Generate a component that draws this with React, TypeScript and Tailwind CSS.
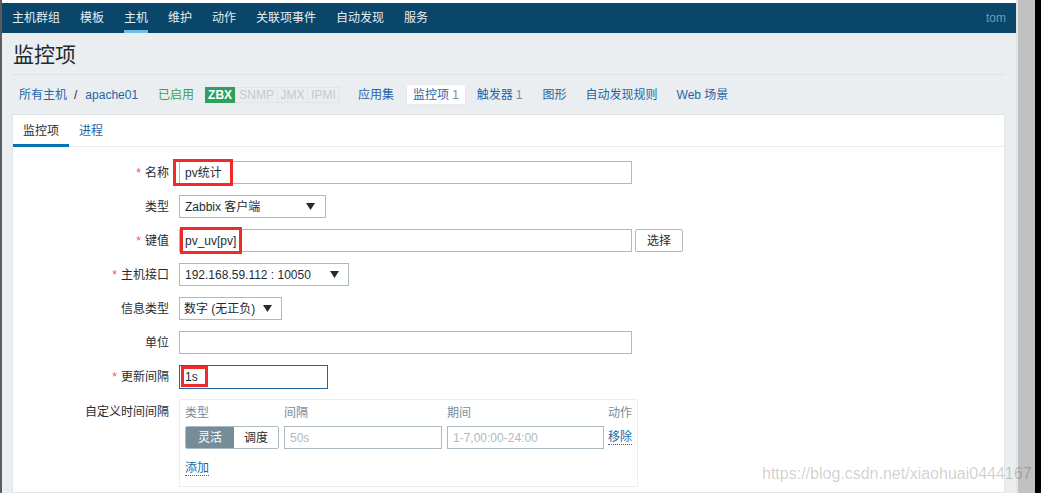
import React from 'react';

const navItems = ['主机群组', '模板', '主机', '维护', '动作', '关联项事件', '自动发现', '服务'];

const Arrow = () => (
  <svg width="9" height="7" viewBox="0 0 9 7" className="shrink-0">
    <polygon points="0,0 9,0 4.5,7" fill="#1f2c33" />
  </svg>
);

const Label = ({ text, required }: { text: string; required?: boolean }) => (
  <div className="w-[156px] shrink-0 text-right text-[#1f2c33]">
    {required ? <span className="mr-[4px] text-[#e45959]">*</span> : null}
    {text}
  </div>
);

const RedBox = ({ cls }: { cls: string }) => (
  <div className={`pointer-events-none absolute border-[3px] border-[#ee2a2a] ${cls}`} />
);

const App = () => {
  return <div className="relative flex h-[493px] w-[1041px] overflow-hidden bg-black font-['Liberation_Sans','Noto_Sans_CJK_SC',sans-serif] text-[12px] leading-[14px]">
      <div className="w-[2px] shrink-0 bg-[#5c5c5c]" />
      <div className="flex w-[1014px] shrink-0 flex-col bg-[#ebeef0]">
        <div className="h-[3px] bg-white" />
        <nav className="flex h-[30px] items-stretch bg-[#0a466a]">
          {navItems.map(item => <div key={item} className="relative flex items-center px-[10px] text-[#e6edf2]">
              {item}
              {item === '主机' ? <div className="absolute bottom-0 left-[10px] right-[10px] h-[3px] bg-[#6cbcec]" /> : null}
            </div>)}
          <div className="ml-auto flex items-center pr-[10px] text-[#6f9bb8]">tom</div>
        </nav>
        <div className="ml-[10px] mr-[11px] flex h-[42px] items-center border-b border-[#dde2e5] pl-[1px] pt-[2px]">
          <h1 className="text-[21px] font-normal leading-[24px] text-[#1f2c33]">监控项</h1>
        </div>
        <div className="flex h-[39px] items-center pl-[17px] text-[#1f65a6]">
          <span>所有主机</span>
          <span className="ml-[7px] mr-[8px] text-[#1f2c33]">/</span>
          <span>apache01</span>
          <span className="ml-[20px] text-[#429e47]">已启用</span>
          <div className="ml-[11px] flex h-[16px] items-stretch leading-[14px]">
            <span className="flex w-[30px] items-center justify-center bg-[#2ea160] font-bold text-white">ZBX</span>
            <span className="flex w-[43px] items-center justify-center border border-[#dfe4e7] text-[#c3cacf]">SNMP</span>
            <span className="flex w-[30px] items-center justify-center border border-l-0 border-[#dfe4e7] text-[#c3cacf]">JMX</span>
            <span className="flex w-[32px] items-center justify-center border border-l-0 border-[#dfe4e7] text-[#c3cacf]">IPMI</span>
          </div>
          <span className="ml-[18px]">应用集</span>
          <span className="ml-[12px] flex h-[21px] items-center rounded-[2px] border border-[#e6eaec] bg-white px-[6px]">
            监控项<span className="ml-[3px] text-[#768d99]">1</span>
          </span>
          <span className="ml-[11px]">触发器<span className="ml-[3px] text-[#768d99]">1</span></span>
          <span className="ml-[20px]">图形</span>
          <span className="ml-[19px]">自动发现规则</span>
          <span className="ml-[19px]">Web 场景</span>
        </div>
        <div className="ml-[10px] mr-[11px] flex-1 border border-[#dfe4e7] bg-white">
          <div className="flex h-[32px] items-stretch border-b border-[#ebeef0]">
            <div className="relative flex items-center px-[10px] text-[#1f2c33]">
              监控项
              <div className="absolute bottom-[-1px] left-0 right-0 h-[3px] bg-[#0275b8]" />
            </div>
            <div className="flex items-center px-[10px] text-[#1f65a6]">进程</div>
          </div>
          <div className="flex flex-col gap-[11px] pt-[14px]">
            <div className="flex h-[23px] items-center">
              <Label text="名称" required />
              <div className="relative ml-[10px] flex h-[23px] w-[453px] items-center border border-[#acbbc2] px-[5px] text-[#1f2c33]">
                pv统计
                <RedBox cls="left-[-7px] top-[-3px] h-[27px] w-[60px]" />
              </div>
            </div>
            <div className="flex h-[23px] items-center">
              <Label text="类型" />
              <div className="ml-[10px] flex h-[23px] w-[147px] items-center justify-between border border-[#acbbc2] pl-[5px] pr-[10px] text-[#1f2c33]">
                Zabbix 客户端<Arrow />
              </div>
            </div>
            <div className="flex h-[23px] items-center">
              <Label text="键值" required />
              <div className="relative ml-[10px] flex h-[23px] w-[453px] items-center border border-[#acbbc2] px-[5px] text-[#1f2c33]">
                pv_uv[pv]
                <RedBox cls="left-0 top-[-3px] h-[27px] w-[62px]" />
              </div>
              <div className="ml-[3px] flex h-[23px] w-[48px] items-center justify-center rounded-[2px] border border-[#acbbc2] text-[#1f2c33]">
                选择
              </div>
            </div>
            <div className="flex h-[23px] items-center">
              <Label text="主机接口" required />
              <div className="ml-[10px] flex h-[23px] w-[170px] items-center justify-between border border-[#acbbc2] pl-[5px] pr-[9px] text-[#1f2c33]">
                192.168.59.112 : 10050<Arrow />
              </div>
            </div>
            <div className="flex h-[23px] items-center">
              <Label text="信息类型" />
              <div className="ml-[10px] flex h-[23px] w-[103px] items-center justify-between border border-[#acbbc2] pl-[4px] pr-[9px] text-[#1f2c33]">
                数字 (无正负)<Arrow />
              </div>
            </div>
            <div className="flex h-[23px] items-center">
              <Label text="单位" />
              <div className="ml-[10px] h-[23px] w-[453px] border border-[#acbbc2]" />
            </div>
            <div className="flex h-[23px] items-center">
              <Label text="更新间隔" required />
              <div className="relative ml-[10px] flex h-[24px] w-[149px] items-center border border-[#1f65a6] px-[5px] text-[#1f2c33]">
                1s
                <RedBox cls="left-[1px] top-0 h-[21px] w-[27px]" />
              </div>
            </div>
            <div className="flex items-start">
              <div className="pt-[6px]"><Label text="自定义时间间隔" /></div>
              <div className="ml-[10px] w-[459px] border border-[#ebeef0] px-[5px] pb-[10px]">
                <div className="flex h-[26px] items-center pb-[1px] text-[#768d99]">
                  <span className="w-[99px]">类型</span>
                  <span className="w-[163px]">间隔</span>
                  <span className="w-[157px]">期间</span>
                  <span className="ml-auto">动作</span>
                </div>
                <div className="flex h-[23px] items-center">
                  <div className="flex h-[23px] w-[94px] overflow-hidden rounded-[2px] border border-[#acbbc2]">
                    <span className="flex w-[48px] items-center justify-center bg-[#768d99] text-white">灵活</span>
                    <span className="flex flex-1 items-center justify-center text-[#1f2c33]">调度</span>
                  </div>
                  <div className="ml-[5px] flex h-[23px] w-[158px] items-center border border-[#acbbc2] px-[5px] text-[#acbbc2]">50s</div>
                  <div className="ml-[5px] flex h-[23px] w-[157px] items-center border border-[#acbbc2] px-[5px] text-[#acbbc2]">1-7,00:00-24:00</div>
                  <span className="ml-auto border-b border-dotted border-[#1f65a6] text-[#1f65a6]">移除</span>
                </div>
                <div className="mt-[12px] flex">
                  <span className="border-b border-dotted border-[#1f65a6] text-[#1f65a6]">添加</span>
                </div>
              </div>
            </div>
          </div>
        </div>
      </div>
      <div className="w-[2px] shrink-0 bg-[#e4e4e4]" />
      <div className="w-[17px] shrink-0 bg-[#c1c1c1]" />
      <div className="flex-1 bg-black" />
      <div className="pointer-events-none absolute left-[762px] top-[465px] whitespace-nowrap text-[16px] leading-[18px] text-black/20">
        https://blog.csdn.net/xiaohuai0444167
      </div>
    </div>;
};

export default App;
